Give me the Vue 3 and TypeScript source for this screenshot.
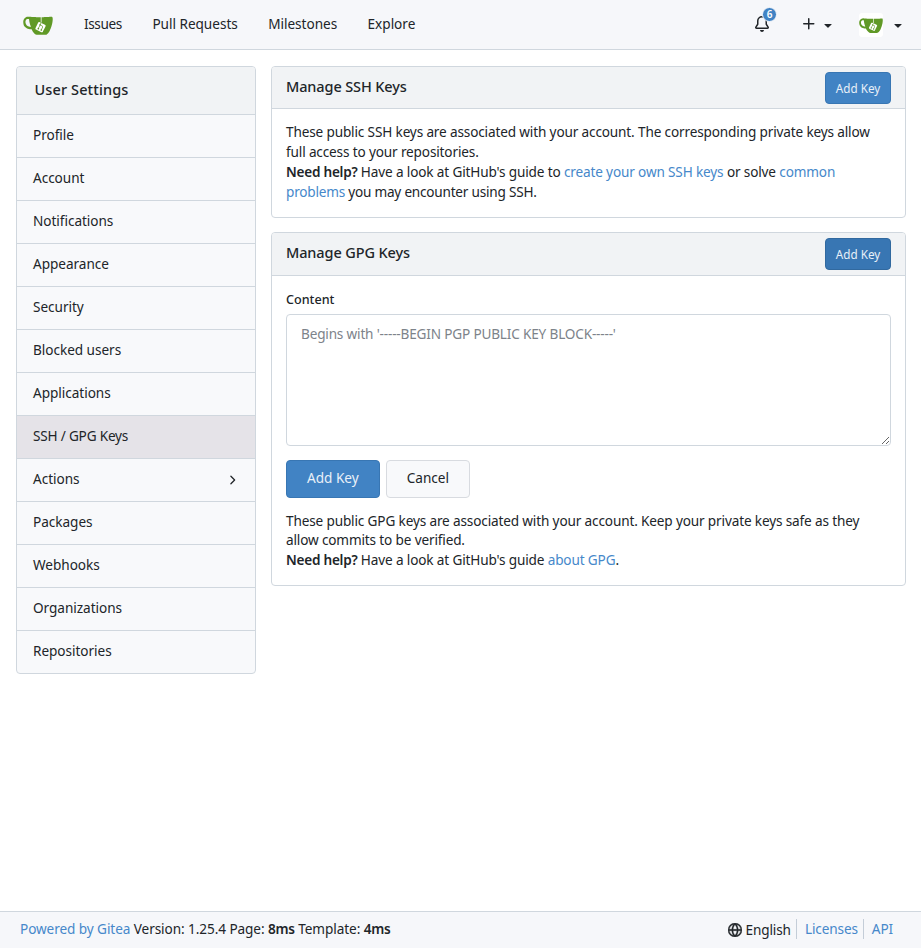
<script setup lang="ts">
import { ref } from 'vue'

interface MenuItem {
  label: string
  active?: boolean
  expandable?: boolean
}

const navLinks: string[] = ['Issues', 'Pull Requests', 'Milestones', 'Explore']

const menu: MenuItem[] = [
  { label: 'Profile' },
  { label: 'Account' },
  { label: 'Notifications' },
  { label: 'Appearance' },
  { label: 'Security' },
  { label: 'Blocked users' },
  { label: 'Applications' },
  { label: 'SSH / GPG Keys', active: true },
  { label: 'Actions', expandable: true },
  { label: 'Packages' },
  { label: 'Webhooks' },
  { label: 'Organizations' },
  { label: 'Repositories' },
]

const unread = ref(6)
const gpgKey = ref('')

const cupBag = 'm395.9 484.2-126.9-61c-12.5-6-17.9-21.2-11.8-33.8l61-126.9c6-12.5 21.2-17.9 33.8-11.8 17.2 8.3 27.1 13 27.1 13l-.1-109.2 16.7-.1.1 117.1s57.4 24.2 83.1 40.1c3.7 2.3 10.2 6.8 12.9 14.4 2.1 6.1 2 13.1-1 19.3l-61 126.9c-6.2 12.7-21.4 18.1-33.9 12'
const cupBody = 'M622.7 149.8c-4.1-4.1-9.6-4-9.6-4s-117.2 6.6-177.9 8c-13.3.3-26.5.6-39.6.7v117.2c-5.5-2.6-11.1-5.3-16.6-7.9 0-36.4-.1-109.2-.1-109.2-29 .4-89.2-2.2-89.2-2.2s-141.4-7.1-156.8-8.5c-9.8-.6-22.5-2.1-39 1.5-8.7 1.8-33.5 7.4-53.8 26.9C-4.9 212.4 6.6 276.2 8 285.8c1.7 11.7 6.9 44.2 31.7 72.5 45.8 56.1 144.4 54.8 144.4 54.8s12.1 28.9 30.6 55.5c25 33.1 50.7 58.9 75.7 62 63 0 188.9-.1 188.9-.1s12 .1 28.3-10.3c14-8.5 26.5-23.4 26.5-23.4S547 483 565 451.5c5.5-9.7 10.1-19.1 14.1-28 0 0 55.2-117.1 55.2-231.1-1.1-34.5-9.6-40.6-11.6-42.6M125.6 353.9c-25.9-8.5-36.9-18.7-36.9-18.7S69.6 321.8 60 295.4c-16.5-44.2-1.4-71.2-1.4-71.2s8.4-22.5 38.5-30c13.8-3.7 31-3.1 31-3.1s7.1 59.4 15.7 94.2c7.2 29.2 24.8 77.7 24.8 77.7s-26.1-3.1-43-9.1m300.3 107.6s-6.1 14.5-19.6 15.4c-5.8.4-10.3-1.2-10.3-1.2s-.3-.1-5.3-2.1l-112.9-55s-10.9-5.7-12.8-15.6c-2.2-8.1 2.7-18.1 2.7-18.1L322 273s4.8-9.7 12.2-13c.6-.3 2.3-1 4.5-1.5 8.1-2.1 18 2.8 18 2.8L467.4 315s12.6 5.7 15.3 16.2c1.9 7.4-.5 14-1.8 17.2-6.3 15.4-55 113.1-55 113.1'
const cupMark = 'M326.8 380.1c-8.2.1-15.4 5.8-17.3 13.8s2 16.3 9.1 20c7.7 4 17.5 1.8 22.7-5.4 5.1-7.1 4.3-16.9-1.8-23.1l24-49.1c1.5.1 3.7.2 6.2-.5 4.1-.9 7.1-3.6 7.1-3.6 4.2 1.8 8.6 3.8 13.2 6.1 4.8 2.4 9.3 4.9 13.4 7.3.9.5 1.8 1.1 2.8 1.9 1.6 1.3 3.4 3.1 4.7 5.5 1.9 5.5-1.9 14.9-1.9 14.9-2.3 7.6-18.4 40.6-18.4 40.6-8.1-.2-15.3 5-17.7 12.5-2.6 8.1 1.1 17.3 8.9 21.3s17.4 1.7 22.5-5.3c5-6.8 4.6-16.3-1.1-22.6 1.9-3.7 3.7-7.4 5.6-11.3 5-10.4 13.5-30.4 13.5-30.4.9-1.7 5.7-10.3 2.7-21.3-2.5-11.4-12.6-16.7-12.6-16.7-12.2-7.9-29.2-15.2-29.2-15.2s0-4.1-1.1-7.1c-1.1-3.1-2.8-5.1-3.9-6.3 4.7-9.7 9.4-19.3 14.1-29-4.1-2-8.1-4-12.2-6.1-4.8 9.8-9.7 19.7-14.5 29.5-6.7-.1-12.9 3.5-16.1 9.4-3.4 6.3-2.7 14.1 1.9 19.8z'
const caret = 'm4.427 7.427 3.396 3.396a.25.25 0 0 0 .354 0l3.396-3.396A.25.25 0 0 0 11.396 7H4.604a.25.25 0 0 0-.177.427Z'
</script>

<template>
  <div class="page">
    <nav class="navbar">
      <div class="nav-left">
        <svg class="logo" viewBox="0 0 640 640" width="30" height="30">
          <path :d="cupBag" fill="#fff" />
          <path :d="cupBody" fill="#609926" />
          <path :d="cupMark" fill="#609926" />
        </svg>
        <a v-for="(link, i) in navLinks" :key="link" class="nav-link" :class="{ first: i === 0 }">{{ link }}</a>
      </div>
      <div class="nav-right">
        <span class="bell">
          <svg viewBox="0 0 16 16" width="16" height="16">
            <path d="M8 16a2 2 0 0 0 1.985-1.75c.017-.137-.097-.25-.235-.25h-3.5c-.138 0-.252.113-.235.25A2 2 0 0 0 8 16ZM3 5a5 5 0 0 1 10 0v2.947c0 .05.015.098.042.139l1.703 2.555A1.519 1.519 0 0 1 13.482 13H2.518a1.516 1.516 0 0 1-1.263-2.36l1.703-2.554A.255.255 0 0 0 3 7.947Zm5-3.5A3.5 3.5 0 0 0 4.5 5v2.947c0 .346-.102.683-.294.97l-1.703 2.556a.017.017 0 0 0-.003.01l.001.006c0 .002.002.004.004.006l.006.004.007.001h10.964l.007-.001.006-.004.004-.006.001-.007a.017.017 0 0 0-.003-.01l-1.703-2.554a1.745 1.745 0 0 1-.294-.97V5A3.5 3.5 0 0 0 8 1.5Z" />
          </svg>
          <span class="badge">{{ unread }}</span>
        </span>
        <span class="create">
          <svg class="plus" viewBox="0 0 16 16" width="16" height="16">
            <path d="M7.75 2a.75.75 0 0 1 .75.75V7h4.25a.75.75 0 0 1 0 1.5H8.5v4.25a.75.75 0 0 1-1.5 0V8.5H2.75a.75.75 0 0 1 0-1.5H7V2.75A.75.75 0 0 1 7.75 2Z" />
          </svg>
          <svg class="caret" viewBox="0 0 16 16" width="16" height="16"><path :d="caret" /></svg>
        </span>
        <span class="user">
          <span class="avatar">
            <svg viewBox="0 0 640 640" width="24" height="24">
              <path :d="cupBag" fill="#fff" />
              <path :d="cupBody" fill="#609926" />
              <path :d="cupMark" fill="#609926" />
            </svg>
          </span>
          <svg class="caret" viewBox="0 0 16 16" width="16" height="16"><path :d="caret" /></svg>
        </span>
      </div>
    </nav>

    <div class="content">
      <aside class="sidebar">
        <div class="menu-header">User Settings</div>
        <a v-for="item in menu" :key="item.label" class="menu-item" :class="{ active: item.active }">
          <span class="menu-label">{{ item.label }}</span>
          <svg v-if="item.expandable" viewBox="0 0 16 16" width="14" height="14">
            <path d="M6.22 3.22a.75.75 0 0 1 1.06 0l4.25 4.25a.75.75 0 0 1 0 1.06l-4.25 4.25a.751.751 0 0 1-1.042-.018.751.751 0 0 1-.018-1.042L9.94 8 6.22 4.28a.75.75 0 0 1 0-1.06Z" />
          </svg>
        </a>
      </aside>

      <main class="main">
        <section class="card">
          <header class="card-header">
            <h4>Manage SSH Keys</h4>
            <button class="btn primary tiny">Add Key</button>
          </header>
          <div class="card-body ssh">
            <p>These public SSH keys are associated with your account. The corresponding private keys allow</p>
            <p>full access to your repositories.</p>
            <p><strong>Need help?</strong> Have a look at GitHub's guide to <a>create your own SSH keys</a> or solve <a>common</a></p>
            <p class="tight"><a>problems</a> you may encounter using SSH.</p>
          </div>
        </section>

        <section class="card">
          <header class="card-header tall">
            <h4>Manage GPG Keys</h4>
            <button class="btn primary tiny dark">Add Key</button>
          </header>
          <div class="card-body gpg">
            <label for="gpg-content">Content</label>
            <textarea id="gpg-content" v-model="gpgKey" placeholder="Begins with '-----BEGIN PGP PUBLIC KEY BLOCK-----'"></textarea>
            <div class="actions">
              <button class="btn primary">Add Key</button>
              <button class="btn">Cancel</button>
            </div>
            <div class="help">
              <p>These public GPG keys are associated with your account. Keep your private keys safe as they</p>
              <p>allow commits to be verified.</p>
              <p><strong>Need help?</strong> Have a look at GitHub's guide <a>about GPG</a>.</p>
            </div>
          </div>
        </section>
      </main>
    </div>

    <footer class="footer">
      <div class="foot-left"><a>Powered by Gitea</a> Version: 1.25.4 Page: <strong>8ms</strong> Template: <strong>4ms</strong></div>
      <div class="foot-right">
        <span class="lang">
          <svg class="globe" viewBox="0 0 16 16" width="14" height="14">
            <path d="M8 0a8 8 0 1 1 0 16A8 8 0 0 1 8 0ZM5.78 8.75a9.64 9.64 0 0 0 1.363 4.177c.255.426.542.832.857 1.215.245-.296.551-.705.857-1.215A9.64 9.64 0 0 0 10.22 8.75Zm4.44-1.5a9.64 9.64 0 0 0-1.363-4.177c-.307-.51-.612-.919-.857-1.215a9.927 9.927 0 0 0-.857 1.215A9.64 9.64 0 0 0 5.78 7.25Zm-5.944 1.5H1.543a6.507 6.507 0 0 0 4.666 5.5c-.123-.181-.24-.365-.352-.552-.715-1.192-1.437-2.874-1.581-4.948Zm-2.733-1.5h2.733c.144-2.074.866-3.756 1.58-4.948.12-.197.237-.381.353-.552a6.507 6.507 0 0 0-4.666 5.5Zm10.181 1.5c-.144 2.074-.866 3.756-1.58 4.948-.12.197-.237.381-.353.552a6.507 6.507 0 0 0 4.666-5.5Zm2.733-1.5a6.507 6.507 0 0 0-4.666-5.5c.123.181.24.365.353.552.714 1.192 1.436 2.874 1.58 4.948Z" />
          </svg>
          English
        </span>
        <a class="licenses">Licenses</a>
        <a class="api">API</a>
      </div>
    </footer>
  </div>
</template>

<style>
body {
  background: #fff;
}
</style>

<style scoped>
.page {
  box-sizing: border-box;
  display: flex;
  flex-direction: column;
  min-height: 948px;
  font-family: "Noto Sans", "Open Sans", sans-serif;
  font-size: 13.6px;
  line-height: 20px;
  color: #212529;
}
.page * {
  box-sizing: border-box;
}
svg {
  display: block;
  flex: none;
  fill: currentColor;
}
a {
  color: #4688ca;
}
strong {
  font-weight: 600;
  letter-spacing: -0.25px;
}

.navbar {
  display: flex;
  justify-content: space-between;
  height: 50px;
  padding: 0 16px 0 23px;
  background: #f6f7fa;
  border-bottom: 1px solid #d0d7de;
}
.nav-left,
.nav-right,
.create,
.user {
  display: flex;
  align-items: center;
}
.logo {
  margin: 0 15.7px 0 0;
}
.nav-link {
  padding: 0 15.2px 2px;
  color: #212529;
  letter-spacing: -0.02px;
}
.nav-link.first {
  letter-spacing: -0.35px;
}
.bell {
  position: relative;
  margin: 0 31px 2px 0;
}
.badge {
  position: absolute;
  left: 8px;
  top: -9px;
  width: 15px;
  height: 15px;
  border: 1px solid #f6f7fa;
  border-radius: 50%;
  background: #4183c4;
  color: #fff;
  font-size: 10px;
  font-weight: 600;
  line-height: 13px;
  text-align: center;
}
.create {
  gap: 3px;
  margin-right: 23px;
}
.plus {
  margin-bottom: 1px;
}
.avatar {
  margin-right: 7px;
  border-radius: 3px;
  background: #fff;
}
.user {
  margin-right: -1px;
}

.content {
  display: flex;
  flex: 1;
  align-items: flex-start;
  gap: 15px;
  padding: 16px 15px 0 16px;
}
.sidebar {
  width: 240px;
  border: 1px solid #d0d7de;
  border-radius: 4px;
  overflow: hidden;
  background: #f8f9fb;
}
.menu-header {
  height: 47px;
  padding: 12px 18px 0 17.5px;
  background: #f1f3f5;
  font-size: 14.5px;
  font-weight: 500;
  letter-spacing: 0.12px;
}
.menu-item {
  display: flex;
  align-items: center;
  justify-content: space-between;
  height: 43px;
  padding: 0 16px;
  border-top: 1px solid #d0d7de;
  color: #212529;
  letter-spacing: -0.04px;
}
.menu-label {
  padding-bottom: 2px;
}
.menu-item.active {
  background: #e5e3e8;
  letter-spacing: -0.2px;
}

.main {
  display: flex;
  flex: 1;
  flex-direction: column;
  gap: 14px;
  min-width: 0;
}
.card {
  border: 1px solid #d0d7de;
  border-radius: 4px;
  background: #fff;
  overflow: hidden;
}
.card-header {
  display: flex;
  align-items: center;
  justify-content: space-between;
  height: 42px;
  padding: 0 14px;
  background: #f1f3f5;
  border-bottom: 1px solid #d0d7de;
}
.card-header.tall {
  height: 43px;
}
h4 {
  margin: 0;
  padding-bottom: 4px;
  font-size: 14.5px;
  font-weight: 500;
  line-height: 20px;
  letter-spacing: -0.12px;
}
.card-body {
  padding: 14px;
}
p {
  margin: 0;
  white-space: nowrap;
  letter-spacing: -0.15px;
}
p.tight {
  letter-spacing: -0.22px;
}
.ssh {
  height: 108px;
  padding-top: 13px;
}
.gpg {
  height: 309px;
}
label {
  display: block;
  height: 24px;
  font-size: 12.6px;
  font-weight: 500;
}
textarea {
  display: block;
  width: 100%;
  height: 132px;
  padding: 9px 14px;
  border: 1px solid #d0d7de;
  border-radius: 4px;
  background: #fff;
  color: #212529;
  font: inherit;
  letter-spacing: -0.18px;
  resize: vertical;
}
textarea::placeholder {
  color: #7d838a;
}
.actions {
  display: flex;
  gap: 6px;
  margin: 14px 0 12.65px;
}
.btn {
  height: 38px;
  padding: 0 20px 2px;
  border: 1px solid #d8dbe0;
  border-radius: 4px;
  background: #f8f9fb;
  color: #212529;
  font: inherit;
}
.btn.primary {
  border-color: #3876b3;
  background: #4183c4;
  color: #e9f0f8;
}
.btn.primary.tiny {
  width: 66px;
  height: 32px;
  padding: 0;
  font-size: 11.7px;
}
.btn.primary.dark {
  background: #3876b3;
  border-color: #31699f;
}
.help {
  line-height: 19.6px;
}

.footer {
  display: flex;
  justify-content: space-between;
  height: 37px;
  padding: 7px 20px 0;
  border-top: 1px solid #d0d7de;
  background: #f6f7fa;
  letter-spacing: -0.08px;
}
.foot-right {
  display: flex;
  letter-spacing: -0.12px;
}
.lang {
  display: flex;
  align-items: center;
  gap: 3px;
  height: 22px;
}
.globe {
  stroke: currentColor;
  stroke-width: 0.4;
}
.licenses,
.api {
  height: 20px;
  border-left: 1px solid #c4cdd8;
}
.licenses {
  margin-left: 5px;
  padding: 0 5px 0 8px;
}
.api {
  padding: 0 8px;
}
</style>
